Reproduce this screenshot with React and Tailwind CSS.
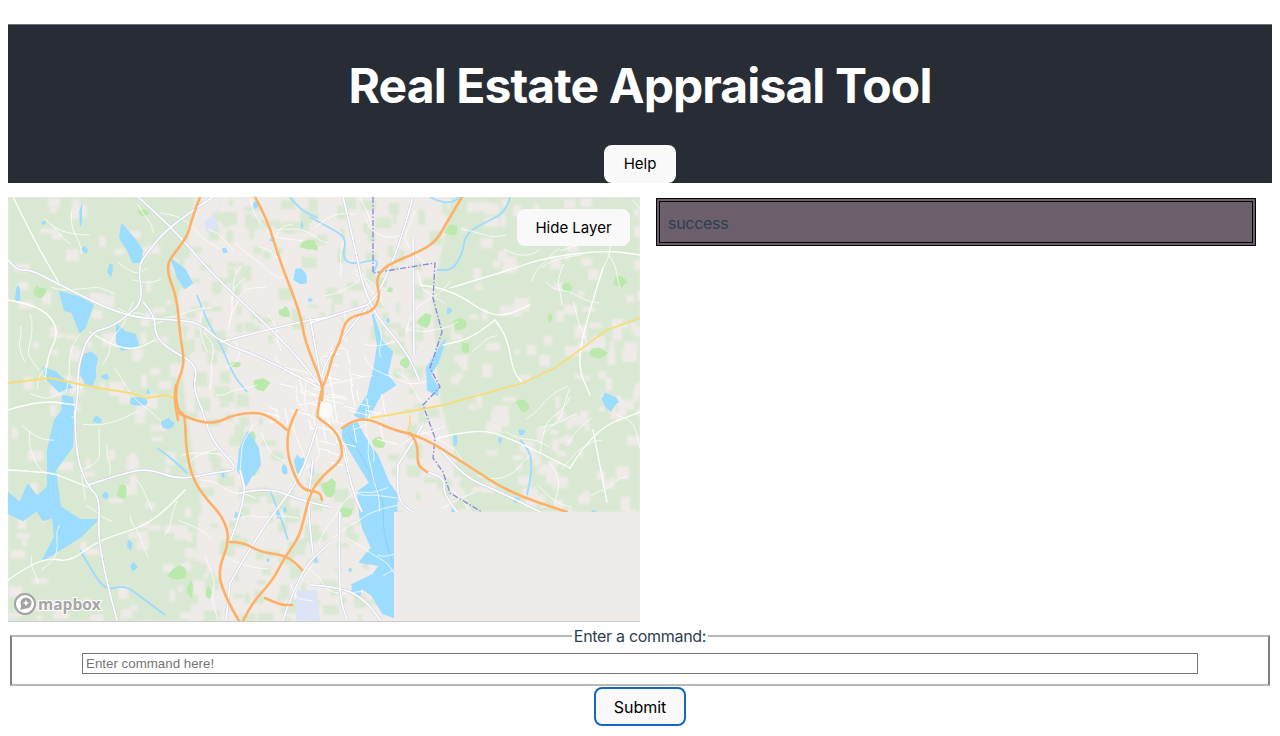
import React from "react";

const LAND = "#efebe8";
const GREEN = "#d9e8d3";
const PARK = "#bbe9ac";
const WATER = "#9bdcff";
const ORANGE = "#ffb067";
const YELLOW = "#f8dc78";

// rounds a list of [x,y] points through the midpoints
function smooth(pts) {
  let d = `M${pts[0][0]} ${pts[0][1]}`;
  for (let i = 1; i < pts.length - 1; i++) {
    const mx = (pts[i][0] + pts[i + 1][0]) / 2;
    const my = (pts[i][1] + pts[i + 1][1]) / 2;
    d += ` Q${pts[i][0]} ${pts[i][1]} ${mx} ${my}`;
  }
  const last = pts[pts.length - 1];
  return `${d} L${last[0]} ${last[1]}`;
}

const highways = [
  [[200,197],[192,218],[188,235],[177,250],[168,262],[168,275],[177,298],[180,335],[184,358],[182,372],[175,388],[178,412],[185,413],[186,450],[193,480],[207,500],[223,517],[230,540],[217,573],[227,600],[239,621]],
  [[255,197],[267,218],[280,262],[300,312],[305,342],[323,385],[322,400]],
  [[462,197],[447,222],[437,240],[423,250],[387,265],[378,275],[377,285],[380,297],[373,312],[348,317],[342,332],[340,342],[332,357],[328,375],[322,387],[317,415],[318,418],[335,430],[342,445],[342,460],[323,475],[310,493],[302,527],[297,540],[283,560],[273,580],[253,602],[243,621]],
  [[178,413],[197,422],[217,423],[233,415],[257,412],[273,418],[287,430]],
  [[297,410],[288,427],[287,453],[295,477],[303,490],[320,492],[322,500]],
  [[230,542],[243,542],[260,552],[283,555],[295,562],[302,570]],
  [[265,598],[280,605],[292,605]],
  [[342,428],[353,420],[370,419],[393,430],[423,437],[467,465],[510,493],[567,512]],
  [[410,433],[418,442],[417,465],[427,472]],
  [[178,420],[174,400],[176,385]],
];

const trunks = [
  [[8,260],[17,271],[30,269],[60,285],[125,317],[177,320],[200,323],[220,342],[263,358],[320,388]],
  [[213,197],[170,225],[147,253],[138,267],[143,302],[125,317]],
  [[138,197],[170,225],[213,275],[253,312],[290,348],[320,385]],
  [[143,302],[155,315],[155,335],[167,348],[198,365],[193,388],[203,412]],
  [[125,317],[113,327],[90,332],[78,365],[78,395],[75,415]],
  [[220,342],[293,323],[330,317]],
  [[310,318],[316,350],[322,385]],
  [[343,197],[353,238],[367,305],[407,352],[420,382]],
  [[413,197],[403,235],[380,292],[367,305]],
  [[367,305],[310,323]],
  [[367,308],[327,355],[320,385]],
  [[413,238],[414,355]],
  [[75,410],[75,453],[88,487],[100,498],[98,537],[107,583],[117,620]],
  [[88,485],[127,472],[150,469],[180,480],[217,472],[240,470],[213,443],[203,413]],
  [[230,542],[247,497],[240,470]],
  [[240,493],[267,487],[300,500],[330,507]],
  [[230,583],[260,530],[300,480],[317,427]],
  [[283,620],[300,570],[330,543]],
  [[313,553],[307,510],[313,460]],
  [[340,512],[338,592],[347,620]],
  [[310,585],[343,587],[367,602],[380,620]],
  [[437,445],[460,475],[500,492],[540,512]],
  [[427,472],[445,477],[443,492],[457,512]],
  [[398,465],[397,485],[400,503],[413,512]],
  [[423,425],[398,465]],
  [[342,445],[352,490],[362,512]],
  [[230,583],[226,620]],
];

const minorRoads = [
  [[13,197],[33,238],[60,285]],
  [[8,300],[40,305],[60,330],[48,355],[45,380]],
  [[90,332],[110,345],[135,350],[155,340]],
  [[8,410],[40,400],[75,405]],
  [[8,470],[50,472],[65,478],[88,487]],
  [[8,580],[30,565],[50,558],[70,562],[98,540],[150,525],[185,490]],
  [[420,285],[450,288],[495,320],[530,305]],
  [[450,288],[510,270],[543,258],[605,250],[640,255]],
  [[495,320],[473,338],[443,345]],
  [[495,320],[507,335],[513,372],[523,383]],
  [[603,268],[587,318],[577,365],[590,395]],
  [[438,438],[477,428],[510,438],[570,468]],
  [[570,468],[593,430],[640,412]],
  [[593,430],[607,502]],
];

const water = [
  [[343,428],[357,423],[363,435],[377,455],[388,482],[397,495],[394,568],[394,617],[383,613],[372,595],[360,587],[352,585],[373,575],[380,565],[360,562],[372,548],[363,528],[360,515],[358,492],[370,483],[353,455],[343,438]],
  [[373,315],[382,342],[392,352],[387,375],[395,385],[380,395],[372,410],[363,420],[355,415],[368,395],[375,365],[378,345]],
  [[63,410],[73,420],[72,447],[55,470],[60,507],[80,520],[97,520],[80,537],[43,560],[55,537],[53,517],[43,520],[37,510],[23,520],[8,513],[8,493],[20,503],[28,485],[37,497],[48,487],[48,450],[55,420]],
  [[122,225],[135,240],[142,250],[140,262],[133,262],[128,250],[120,238]],
  [[60,292],[80,298],[93,305],[88,318],[85,327],[80,332],[72,312],[65,310]],
  [[117,325],[125,332],[135,335],[138,345],[122,350],[117,342]],
  [[43,368],[55,372],[72,388],[60,392],[48,380]],
  [[63,396],[72,398],[74,415],[62,415]],
  [[172,260],[185,270],[192,283],[185,288],[178,278]],
  [[248,432],[258,448],[260,465],[250,478],[246,485],[238,470],[240,450]],
  [[445,340],[438,362],[430,375],[438,388],[437,395],[428,390],[427,368]],
];

const ponds = [
  [90,369,9,15],[300,277,8,9],[137,402,10,5],[610,402,8,9],[449,311,3,3],[97,420,4,4],[167,423,7,5],
  [81,215,1.5,12],[110,270,3,7],[18,295,3,8],[85,250,3,4],[44,223,3,2],[256,205,3,4],[302,225,1.5,4],
  [105,377,4,3],[148,392,2,3],[105,495,4,4],[130,545,3,5],[134,567,3,4],[312,470,2,5],
  [285,470,3,6],[300,465,5,10],[285,510,2,3],[240,515,2,3],[278,515,2,4],[357,590,6,8],[388,320,2,3],
  [225,250,3,3],[272,240,2,2],[310,300,2,2],[223,475,2,3],[236,515,2,3],[500,440,2,3],[517,500,4,3],
  [522,432,4,3],[455,440,2,6],[594,512,3,2],[350,570,2,2],[316,560,2,3],[268,560,2,2],[453,513,2,4],
];

const streams = [
  [[510,197],[507,212],[480,225],[465,235],[463,252],[453,270],[437,270]],
  [[310,217],[330,228],[347,238],[342,258],[353,265],[380,258],[373,273]],
  [[430,197],[445,205],[462,197]],
  [[157,448],[168,455],[187,473]],
  [[80,550],[97,580],[108,590],[125,585],[145,600],[165,615]],
  [[197,295],[207,322],[220,342],[233,375],[247,392]],
  [[290,197],[300,210],[318,218]],
  [[270,490],[280,515],[288,540]],
  [[520,440],[530,450],[532,470],[527,495]],
];

const parks = [
  [40,292,6,6],[143,212,5,4],[285,313,6,6],[262,383,8,7],[308,245,8,6],[425,320,8,7],[460,325,8,6],
  [465,348,5,7],[523,405,7,6],[620,282,7,6],[567,288,6,5],[597,353,10,5],[452,230,7,7],[253,460,9,15],
  [122,492,5,10],[177,573,9,7],[252,437,4,8],[378,443,7,7],[330,488,8,10],[405,363,6,6],[347,512,7,5],
  [315,248,3,3],[550,318,2,5],[390,290,3,3],[190,590,3,8],[209,593,3,6],[235,365,6,3],
];

// a little fixed generator so that the mottled land cover stays the same on every load
let seed = 41;
const rnd = () => {
  seed = (seed * 16807) % 2147483647;
  return seed / 2147483647;
};

// irregular outline for lakes and parks
function blob(x, y, rx, ry) {
  const pts = [];
  for (let i = 0; i < 9; i++) {
    const a = (i / 9) * Math.PI * 2;
    const k = 0.65 + rnd() * 0.6;
    pts.push(`${x + Math.cos(a) * rx * k},${y + Math.sin(a) * ry * k}`);
  }
  return pts.join(" ");
}

const pondShapes = ponds.map(([x, y, w, h]) => blob(x, y, w, h));
const parkShapes = parks.map(([x, y, w, h]) => blob(x, y, w, h));

const landPatches = [];
for (let i = 0; i < 520; i++) {
  const x = 8 + rnd() * 632;
  const y = 197 + rnd() * 424;
  if (x > 190 && x < 450) continue;
  landPatches.push([x, y, 4 + rnd() * 12, 4 + rnd() * 10]);
}

const greenPatches = [];
for (let i = 0; i < 340; i++) {
  const x = 170 + rnd() * 290;
  const y = 197 + rnd() * 424;
  if (Math.hypot(x - 330, y - 400) < 70) continue;
  greenPatches.push([x, y, 3 + rnd() * 13, 3 + rnd() * 12]);
}

// local streets: short wandering lines all over the sheet
const localRoads = [];
for (let i = 0; i < 130; i++) {
  let x = 8 + rnd() * 632;
  let y = 197 + rnd() * 424;
  let a = rnd() * Math.PI * 2;
  const pts = [[x, y]];
  const steps = 3 + Math.floor(rnd() * 3);
  for (let s = 0; s < steps; s++) {
    a += (rnd() - 0.5) * 1.4;
    const len = 7 + rnd() * 11;
    x += Math.cos(a) * len;
    y += Math.sin(a) * len;
    pts.push([x, y]);
  }
  localRoads.push(pts);
}

// tighter street grid downtown
const cityStreets = [];
for (let i = 0; i < 60; i++) {
  const a = rnd() * Math.PI * 2;
  const r = rnd() * 62;
  const x = 325 + Math.cos(a) * r;
  const y = 405 + Math.sin(a) * r;
  const flat = i % 2 === 0;
  const len = 8 + rnd() * 18;
  cityStreets.push([x, y, x + (flat ? len : len * 0.18), y + (flat ? len * 0.25 : len)]);
}

function MapArt() {
  return (
    <svg viewBox="8 197 632 424" className="block h-full w-full" preserveAspectRatio="none">
      <defs>
        <filter id="soft" x="0" y="0" width="100%" height="100%">
          <feGaussianBlur stdDeviation="0.8" />
        </filter>
      </defs>
      <rect x="8" y="197" width="632" height="424" fill={LAND} />
      <g filter="url(#soft)">
        <polygon points="8,197 195,197 178,300 185,400 200,500 190,621 8,621" fill={GREEN} />
        <polygon points="452,197 640,197 640,512 470,512 440,400 432,300" fill={GREEN} />
        {landPatches.map(([x, y, w, h], i) => (
          <rect key={i} x={x} y={y} width={w} height={h} fill={LAND} />
        ))}
        {greenPatches.map(([x, y, w, h], i) => (
          <rect key={i} x={x} y={y} width={w} height={h} fill={GREEN} />
        ))}
      </g>
      {parkShapes.map((p, i) => (
        <polygon key={i} points={p} fill={PARK} />
      ))}
      <polygon points="222,203 213,215 204,222 206,232 220,228 214,218" fill="#dde4f6" />
      <polygon points="296,590 317,590 320,621 296,621" fill="#dde4f6" />
      {streams.map((p, i) => (
        <path key={i} d={smooth(p)} fill="none" stroke={WATER} strokeWidth="1.8" />
      ))}
      {water.map((p, i) => (
        <polygon key={i} points={p.join(" ")} fill={WATER} stroke={WATER} strokeWidth="2" strokeLinejoin="round" />
      ))}
      {pondShapes.map((p, i) => (
        <polygon key={i} points={p} fill={WATER} />
      ))}
      <path d={smooth([[348,433],[385,495],[382,528],[394,568]])} fill="none" stroke="#8dd0f7" strokeWidth="1" />
      {localRoads.map((p, i) => (
        <path key={i} d={smooth(p)} fill="none" stroke="#ffffff" strokeWidth="0.9" strokeLinecap="round" opacity="0.85" />
      ))}
      {minorRoads.map((p, i) => (
        <path key={i} d={smooth(p)} fill="none" stroke="#ffffff" strokeWidth="1.3" strokeLinecap="round" />
      ))}
      {cityStreets.map(([x1, y1, x2, y2], i) => (
        <line key={i} x1={x1} y1={y1} x2={x2} y2={y2} stroke="#ffffff" strokeWidth="1" />
      ))}
      <circle cx="325" cy="410" r="8" fill="#fbfaf9" />
      {trunks.map((p, i) => (
        <path key={i} d={smooth(p)} fill="none" stroke="#d3d8e4" strokeWidth="3" strokeLinejoin="round" />
      ))}
      {trunks.map((p, i) => (
        <path key={i} d={smooth(p)} fill="none" stroke="#ffffff" strokeWidth="1.5" strokeLinejoin="round" />
      ))}
      <polyline points="8,383 50,378 93,387 130,393 147,398 167,395 177,400" fill="none" stroke={YELLOW} strokeWidth="1.8" />
      <polyline points="640,318 607,330 555,368 523,383 443,405 390,415 370,418" fill="none" stroke={YELLOW} strokeWidth="1.8" />
      <polyline points="410,415 410,425 407,433" fill="none" stroke={YELLOW} strokeWidth="1.6" />
      <polyline
        points="373,197 373,273 435,263 433,298 442,332 430,368 440,387 423,405 435,438 433,458 443,472 450,493 482,512"
        fill="none"
        stroke="#8b86d8"
        strokeWidth="1.3"
        strokeDasharray="6 2 1.5 2"
      />
      {highways.map((p, i) => (
        <path key={i} d={smooth(p)} fill="none" stroke={ORANGE} strokeWidth="2.6" strokeLinecap="round" strokeLinejoin="round" />
      ))}
      <rect x="394" y="512" width="246" height="109" fill={LAND} />
    </svg>
  );
}

function MapboxLogo() {
  return (
    <div className="absolute bottom-[6px] left-[6px] flex items-center gap-[2px]">
      <svg width="22" height="22" viewBox="0 0 22 22">
        <circle cx="11" cy="11" r="10" fill="#ffffff" stroke="#a3a3a3" strokeWidth="2" />
        <circle cx="12" cy="10" r="5.5" fill="#a3a3a3" />
        <path d="M6 17 L8 10 L13 15 Z" fill="#a3a3a3" />
        <path d="M12 7.5v5M9.5 10h5" stroke="#ffffff" strokeWidth="1.6" />
      </svg>
      <span className="font-['Open_Sans',sans-serif] text-[15.5px] leading-[20px] font-bold text-[#a6a6a6] [-webkit-text-stroke:2px_#ffffff] [paint-order:stroke]">
        mapbox
      </span>
    </div>
  );
}

export default function App() {
  return (
    <div className="bg-white px-2 pt-6 font-['Inter',sans-serif] text-[16px] text-[#2c3e50]">
      <header className="flex h-[159px] flex-col items-center border-t border-[#70737a] bg-[#282c34] pt-[32px]">
        <h1 className="text-[48px] leading-[58px] font-bold tracking-[-0.9px] text-white">Real Estate Appraisal Tool</h1>
        <button className="mt-[30px] h-[38px] w-[72px] rounded-lg bg-[#f9f9f9] pt-px text-[15px] font-normal text-black">
          Help
        </button>
      </header>

      <div className="mt-[14px] flex items-start">
        <div className="relative h-[425px] w-[632px] border-b border-[#cccccc]">
          <MapArt />
          <button className="absolute top-3 right-[10px] h-[37px] w-[113px] rounded-lg bg-[#f9f9f9] pt-[2px] text-[15px] font-normal text-black">
            Hide Layer
          </button>
          <MapboxLogo />
        </div>
        <div className="mt-px ml-4 h-[48px] w-[600px] border-4 border-double border-black bg-[#6b5f6b] pl-2 text-[16px] leading-[42px] tracking-[-0.3px]">
          success
        </div>
      </div>

      <div className="flex flex-col items-center">
        <fieldset className="mx-[2px] mt-[4px] flex h-[60px] w-[1260px] justify-center border-2 border-x-[#7f7f7f] border-y-[#b8b8b8]">
          <legend className="mx-auto px-[2px] text-center leading-[20px] tracking-[-0.3px]">Enter a command:</legend>
          <input
            placeholder="Enter command here!"
            className="mt-[7px] h-[21px] w-[1116px] border border-[#767676] pl-[3px] font-['Liberation_Sans',sans-serif] text-[13.33px] text-black placeholder:text-[#757575]"
          />
        </fieldset>
        <button className="mt-px h-[39px] w-[92px] rounded-lg border-2 border-[#1565c8] bg-[#f9f9f9] text-[16px] font-normal text-black">
          Submit
        </button>
      </div>
    </div>
  );
}
